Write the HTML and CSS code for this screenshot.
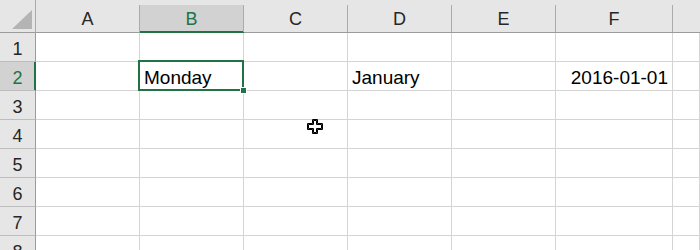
FILE: index.html
```html
<!DOCTYPE html>
<html lang="en">
<head>
    <meta charset="UTF-8">
    <title>Sheet</title>
    <link rel="stylesheet" href="styles.css">
</head>
<body>
    <div class="sheet">
        <div class="corner"><div class="corner-tri"></div></div>
        <div class="col-head"><div class="lbl">A</div></div>
        <div class="col-head active"><div class="lbl">B</div></div>
        <div class="col-head"><div class="lbl">C</div></div>
        <div class="col-head"><div class="lbl">D</div></div>
        <div class="col-head"><div class="lbl">E</div></div>
        <div class="col-head"><div class="lbl">F</div></div>
        <div class="col-head last"><div class="lbl"></div></div>

        <div class="row-head">1</div>
        <div class="cell"></div><div class="cell"></div><div class="cell"></div><div class="cell"></div><div class="cell"></div><div class="cell"></div><div class="cell"></div>

        <div class="row-head active">2</div>
        <div class="cell"></div>
        <div class="cell selected">Monday<span class="handle"></span></div>
        <div class="cell"></div>
        <div class="cell">January</div>
        <div class="cell"></div>
        <div class="cell num">2016-01-01</div>
        <div class="cell"></div>

        <div class="row-head">3</div>
        <div class="cell"></div><div class="cell"></div><div class="cell"></div><div class="cell"></div><div class="cell"></div><div class="cell"></div><div class="cell"></div>
        <div class="row-head">4</div>
        <div class="cell"></div><div class="cell"></div><div class="cell"></div><div class="cell"></div><div class="cell"></div><div class="cell"></div><div class="cell"></div>
        <div class="row-head">5</div>
        <div class="cell"></div><div class="cell"></div><div class="cell"></div><div class="cell"></div><div class="cell"></div><div class="cell"></div><div class="cell"></div>
        <div class="row-head">6</div>
        <div class="cell"></div><div class="cell"></div><div class="cell"></div><div class="cell"></div><div class="cell"></div><div class="cell"></div><div class="cell"></div>
        <div class="row-head">7</div>
        <div class="cell"></div><div class="cell"></div><div class="cell"></div><div class="cell"></div><div class="cell"></div><div class="cell"></div><div class="cell"></div>
        <div class="row-head">8</div>
        <div class="cell"></div><div class="cell"></div><div class="cell"></div><div class="cell"></div><div class="cell"></div><div class="cell"></div><div class="cell"></div>
    </div>

    <!-- mouse pointer over C4 -->
    <svg class="pointer" width="16" height="15" viewBox="0 0 16 15">
        <path d="M5.5 0.5 H10.5 V4.5 H15.5 V10.5 H10.5 V14.5 H5.5 V10.5 H0.5 V4.5 H5.5 Z" fill="#fff" stroke="#000" stroke-width="1"/>
        <path d="M6.5 1.5 H9.5 V5.5 H14.5 V9.5 H9.5 V13.5 H6.5 V9.5 H1.5 V5.5 H6.5 Z" fill="none" stroke="#000" stroke-width="1"/>
    </svg>
</body>
</html>
```

FILE: styles.css
```css
html, body {
    margin: 0;
    padding: 0;
    background-color: white;
    overflow: hidden;
}
body {
    position: relative;
    width: 700px;
    height: 250px;
    font-family: 'Liberation Sans', Arial, sans-serif;
}
.sheet {
    display: grid;
    grid-template-columns: 36px repeat(5, 104px) 117px 1fr;
    grid-template-rows: 33px repeat(8, 29px);
}
.corner {
    background-color: #e6e6e6;
    border-right: 1px solid #ababab;
    border-bottom: 1px solid #9b9b9b;
    box-sizing: border-box;
    display: flex;
    justify-content: flex-end;
    align-items: flex-end;
    padding: 0 3px 3px 0;
}
.corner-tri {
    width: 20px;
    height: 19px;
    background-color: #b4b4b4;
    clip-path: polygon(100% 0, 100% 100%, 0 100%);
}
.col-head {
    background-color: #e6e6e6;
    border-bottom: 1px solid #9b9b9b;
    box-sizing: border-box;
    padding-top: 5px;
}
.col-head .lbl {
    height: 27px;
    border-right: 1px solid #ababab;
    box-sizing: border-box;
    display: flex;
    align-items: center;
    justify-content: center;
    font-size: 18px;
    line-height: 20px;
    color: #262626;
}
.col-head.last .lbl {
    border-right: none;
}
.col-head.active {
    border-bottom-color: #217346;
}
.col-head.active .lbl {
    background-color: #d2d2d2;
    color: #217346;
    box-shadow: inset 0 -1px 0 #217346;
}
.row-head {
    background-color: #e6e6e6;
    border-right: 1px solid #9b9b9b;
    border-bottom: 1px solid #bdbdbd;
    box-sizing: border-box;
    text-align: center;
    font-size: 18px;
    line-height: 20px;
    padding-top: 6px;
    color: #262626;
}
.row-head.active {
    background-color: #d2d2d2;
    color: #217346;
    border-right-color: #217346;
    box-shadow: inset -1px 0 0 #217346;
}
.cell {
    border-right: 1px solid #d4d4d4;
    border-bottom: 1px solid #d4d4d4;
    box-sizing: border-box;
    font-size: 19px;
    line-height: 20px;
    padding: 6px 4px 0 4px;
    color: #000;
    white-space: nowrap;
}
.cell.num {
    text-align: right;
}
.cell.selected {
    position: relative;
}
.cell.selected::before {
    content: "";
    position: absolute;
    top: -2px;
    left: -2px;
    right: -1px;
    bottom: -1px;
    border: 2px solid #217346;
}
.handle {
    position: absolute;
    right: -4px;
    bottom: -4px;
    width: 5px;
    height: 5px;
    background-color: #217346;
    border: 1px solid white;
}
.pointer {
    position: absolute;
    left: 307px;
    top: 119px;
}
```
